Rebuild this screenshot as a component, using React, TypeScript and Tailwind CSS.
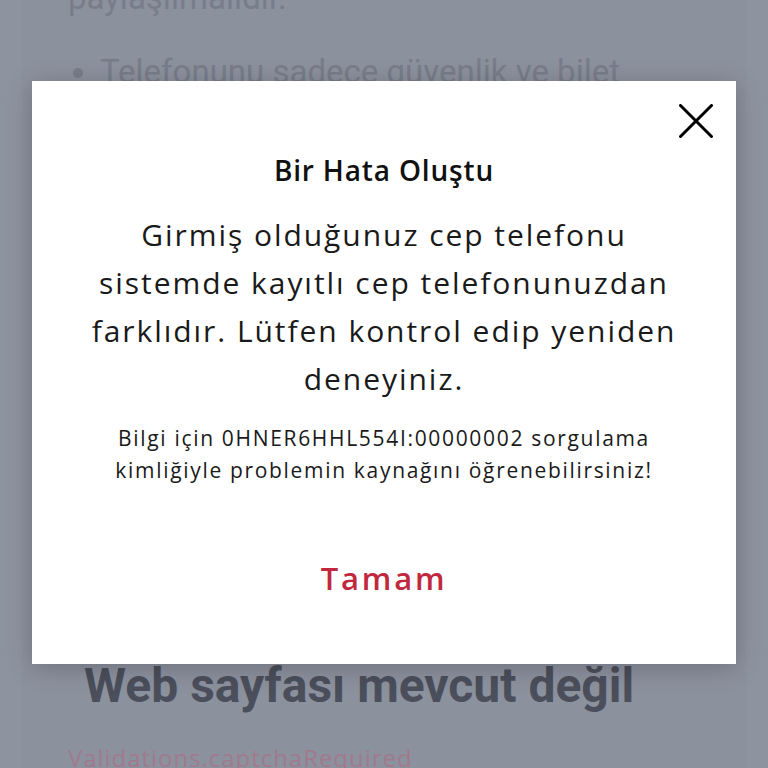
const sans = { fontFamily: '"Open Sans", "Noto Sans", sans-serif' };

function CloseIcon() {
  return (
    <svg width="34" height="34" viewBox="0 0 34 34" fill="none" stroke="currentColor" strokeWidth="3" strokeLinecap="round">
      <line x1="1.5" y1="1.5" x2="32.5" y2="32.5" />
      <line x1="32.5" y1="1.5" x2="1.5" y2="32.5" />
    </svg>
  );
}

function BackgroundPage() {
  return (
    <div className="mx-[22px] flow-root h-full bg-[#8c919e] text-[#787d8a]" style={{ fontFamily: "Roboto, sans-serif" }}>
      <p className="-mt-[22px] pl-[46px] text-[33px] leading-[40px]">paylaşılmalıdır.</p>
      <ul className="mt-[34px] list-disc pl-[78px] text-[33px] leading-[40px]">
        <li>Telefonunu sadece güvenlik ve bilet</li>
      </ul>
      <div className="mt-[566px] pl-[62px] text-[48px] font-bold leading-[56px] text-[#4b4f5b]">
        Web sayfası mevcut değil
      </div>
      <p className="mt-[28px] pl-[46px] text-[24px] leading-[32px] tracking-[0.04em] text-[#a07a8c]" style={sans}>
        Validations.captchaRequired
      </p>
    </div>
  );
}

function ErrorDialog() {
  return (
    <div
      className="absolute left-[32px] top-[81px] flex h-[583px] w-[704px] flex-col items-center bg-white text-center text-[#111] shadow-[0_4px_24px_rgba(0,0,0,0.22)]"
      style={sans}
    >
      <button className="absolute right-[23px] top-[23px] text-black" aria-label="Kapat">
        <CloseIcon />
      </button>
      <h2 className="mt-[71px] text-[28px] font-semibold leading-[36px] tracking-[0.03em]">Bir Hata Oluştu</h2>
      <p className="mt-[23px] text-[30px] leading-[48px] tracking-[0.065em] text-[#1a1a1a]">
        Girmiş olduğunuz cep telefonu
        <br />
        sistemde kayıtlı cep telefonunuzdan
        <br />
        farklıdır. Lütfen kontrol edip yeniden
        <br />
        deneyiniz.
      </p>
      <p className="mt-[19px] text-[21px] leading-[32px] tracking-[0.08em] text-[#1a1a1a]">
        Bilgi için 0HNER6HHL554I:00000002 sorgulama
        <br />
        kimliğiyle problemin kaynağını öğrenebilirsiniz!
      </p>
      <button className="mt-[72px] text-[31px] font-semibold leading-[40px] tracking-[0.09em] text-[#c1283e]">Tamam</button>
    </div>
  );
}

export default function App() {
  return (
    <div className="relative h-[768px] w-[768px] overflow-hidden bg-[#8e93a0]">
      <BackgroundPage />
      <ErrorDialog />
    </div>
  );
}
